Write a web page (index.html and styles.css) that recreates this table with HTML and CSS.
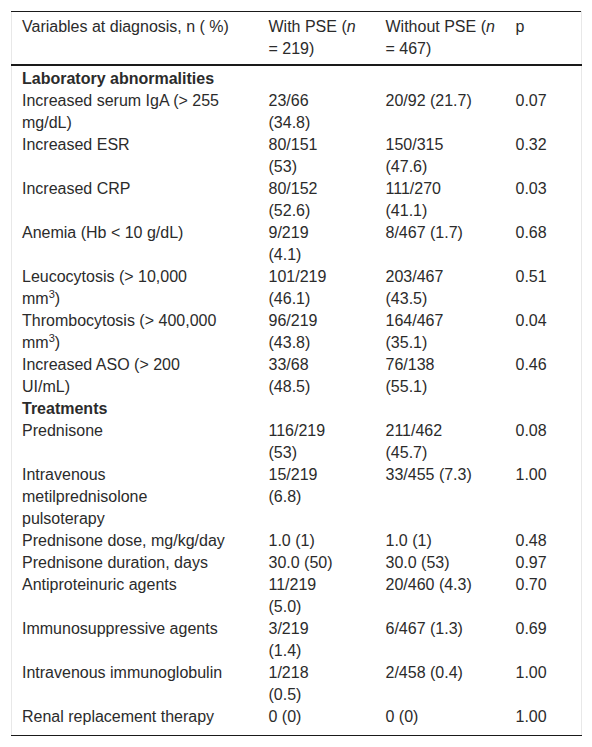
FILE: index.html
```html
<!DOCTYPE html>
<html>

<head>
    <title>Tabla PSE</title>
    <meta charset="utf-8">
    <meta name="viewport" content="width=device-width, initial-scale=1.0">
    <link rel="stylesheet" href="styles.css">
</head>

<body>
    <section class="tabla">
        <table>
            <colgroup>
                <col class="c1">
                <col class="c2">
                <col class="c3">
                <col class="c4">
            </colgroup>
            <thead>
                <tr>
                    <th>Variables at diagnosis, n ( %)</th>
                    <th>With PSE (<i>n</i><br>= 219)</th>
                    <th>Without PSE (<i>n</i><br>= 467)</th>
                    <th>p</th>
                </tr>
            </thead>
            <tbody>
                <tr class="primera">
                    <td colspan="4" class="seccion">Laboratory abnormalities</td>
                </tr>
                <tr>
                    <td>Increased serum IgA (&gt; 255<br>mg/dL)</td>
                    <td>23/66<br>(34.8)</td>
                    <td>20/92 (21.7)</td>
                    <td>0.07</td>
                </tr>
                <tr>
                    <td>Increased ESR</td>
                    <td>80/151<br>(53)</td>
                    <td>150/315<br>(47.6)</td>
                    <td>0.32</td>
                </tr>
                <tr>
                    <td>Increased CRP</td>
                    <td>80/152<br>(52.6)</td>
                    <td>111/270<br>(41.1)</td>
                    <td>0.03</td>
                </tr>
                <tr>
                    <td>Anemia (Hb &lt; 10 g/dL)</td>
                    <td>9/219<br>(4.1)</td>
                    <td>8/467 (1.7)</td>
                    <td>0.68</td>
                </tr>
                <tr>
                    <td>Leucocytosis (&gt; 10,000<br>mm<sup>3</sup>)</td>
                    <td>101/219<br>(46.1)</td>
                    <td>203/467<br>(43.5)</td>
                    <td>0.51</td>
                </tr>
                <tr>
                    <td>Thrombocytosis (&gt; 400,000<br>mm<sup>3</sup>)</td>
                    <td>96/219<br>(43.8)</td>
                    <td>164/467<br>(35.1)</td>
                    <td>0.04</td>
                </tr>
                <tr>
                    <td>Increased ASO (&gt; 200<br>UI/mL)</td>
                    <td>33/68<br>(48.5)</td>
                    <td>76/138<br>(55.1)</td>
                    <td>0.46</td>
                </tr>
                <tr>
                    <td colspan="4" class="seccion">Treatments</td>
                </tr>
                <tr>
                    <td>Prednisone</td>
                    <td>116/219<br>(53)</td>
                    <td>211/462<br>(45.7)</td>
                    <td>0.08</td>
                </tr>
                <tr>
                    <td>Intravenous<br>metilprednisolone<br>pulsoterapy</td>
                    <td>15/219<br>(6.8)</td>
                    <td>33/455 (7.3)</td>
                    <td>1.00</td>
                </tr>
                <tr>
                    <td>Prednisone dose, mg/kg/day</td>
                    <td>1.0 (1)</td>
                    <td>1.0 (1)</td>
                    <td>0.48</td>
                </tr>
                <tr>
                    <td>Prednisone duration, days</td>
                    <td>30.0 (50)</td>
                    <td>30.0 (53)</td>
                    <td>0.97</td>
                </tr>
                <tr>
                    <td>Antiproteinuric agents</td>
                    <td>11/219<br>(5.0)</td>
                    <td>20/460 (4.3)</td>
                    <td>0.70</td>
                </tr>
                <tr>
                    <td>Immunosuppressive agents</td>
                    <td>3/219<br>(1.4)</td>
                    <td>6/467 (1.3)</td>
                    <td>0.69</td>
                </tr>
                <tr>
                    <td>Intravenous immunoglobulin</td>
                    <td>1/218<br>(0.5)</td>
                    <td>2/458 (0.4)</td>
                    <td>1.00</td>
                </tr>
                <tr class="ultima">
                    <td>Renal replacement therapy</td>
                    <td>0 (0)</td>
                    <td>0 (0)</td>
                    <td>1.00</td>
                </tr>
            </tbody>
        </table>
    </section>
</body>

</html>
```

FILE: styles.css
```css
body {
    margin: 0;
    font-family: "Liberation Sans", Arial, sans-serif;
    font-size: 16px;
    color: #2b2b2b;
    background: white;
}

.tabla {
    padding: 11px 0 0 11px;
}

table {
    width: 570px;
    table-layout: fixed;
    border-collapse: collapse;
    border-top: 1px solid #1a1a1a;
    border-bottom: 1px solid #1a1a1a;
    border-left: 1px solid #e8e8e8;
    border-right: 1px solid #e8e8e8;
}

.c1 {
    width: 247px;
}

.c2 {
    width: 117px;
}

.c3 {
    width: 130px;
}

.c4 {
    width: 76px;
}

th {
    font-weight: normal;
    text-align: left;
    vertical-align: top;
    line-height: 22px;
    padding: 4px 10px;
    border-bottom: 2px solid #1a1a1a;
}

td {
    vertical-align: top;
    line-height: 22px;
    padding: 0 10px;
}

.seccion {
    font-weight: bold;
}

.primera td {
    padding-top: 2px;
}

.ultima td {
    padding-bottom: 7px;
}

sup {
    font-size: 11px;
    line-height: 0;
}
```
